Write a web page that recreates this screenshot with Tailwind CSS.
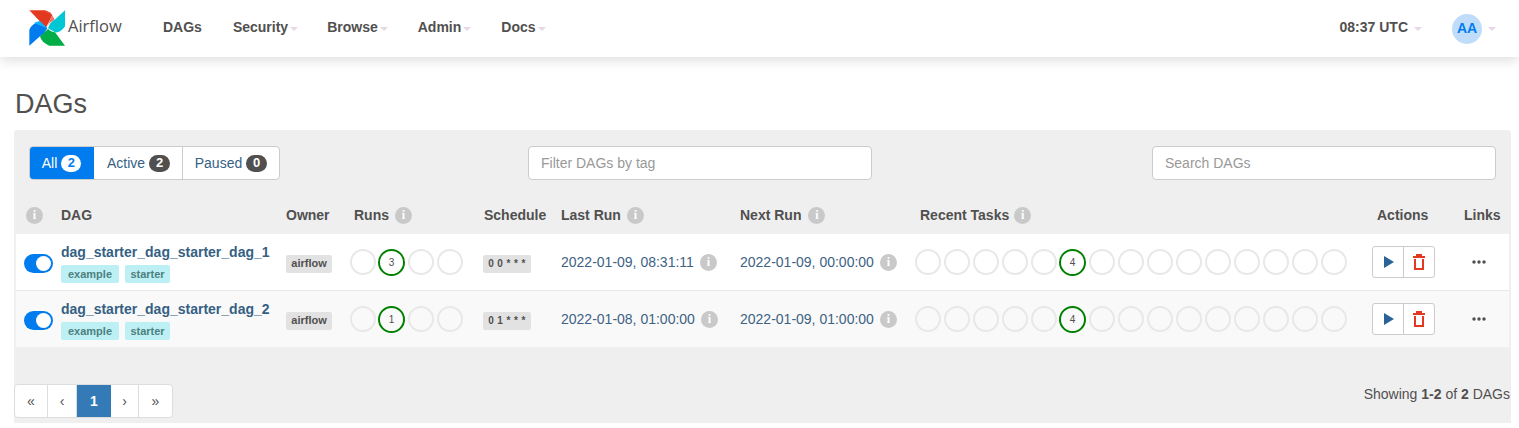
<!DOCTYPE html>
<html><head><meta charset="utf-8"><script src="https://cdn.jsdelivr.net/npm/@tailwindcss/browser@4"></script></head>
<body class="bg-white overflow-hidden font-['Liberation_Sans',Arial,sans-serif] text-[14px] text-[#51504f]">
<nav class="h-[57px] bg-white shadow-[0_3px_12px_rgba(0,0,0,0.14)] flex items-center relative font-bold pb-[2px]">
  <svg class="ml-[20px] w-[50px] h-[50px] shrink-0" viewBox="0 0 150 150" aria-hidden="true">
    <path d="M28 22 L75 22 Q92 27 97 37 L78 74 Z" fill="#e43921"/>
    <path d="M75 24 Q95 30 104 50 Q88 56 80 74 L97 37 Z" fill="#f0705c"/>
    <path d="M135 22 L135 70 Q122 90 105 88 L84 76 Q90 56 104 50 Z" fill="#00c7d4"/>
    <path d="M135 128 L88 128 Q64 118 60 100 L84 78 Q96 88 105 88 Z" fill="#00ad46"/>
    <path d="M28 128 L28 80 Q38 60 60 55 L82 76 Q74 92 60 100 Z" fill="#017cee"/>
    <path d="M42 60 Q50 55 60 55 L82 76 Z" fill="#0cb6ff"/>
  </svg>
  <span class="text-[16.5px] font-normal font-['Open_Sans',sans-serif] text-[#51504f] -ml-[2px] w-[95px] mt-[-3px]">Airflow</span>
  <span>DAGs</span>
  <span class="ml-[31px]">Security</span><svg class="w-[8px] h-[4px] ml-[2px] mt-[2px]" viewBox="0 0 8 4"><path d="M0 0H8L4 4Z" fill="#e6d8e6"/></svg>
  <span class="ml-[29px]">Browse</span><svg class="w-[8px] h-[4px] ml-[2px] mt-[2px]" viewBox="0 0 8 4"><path d="M0 0H8L4 4Z" fill="#e6d8e6"/></svg>
  <span class="ml-[30px]">Admin</span><svg class="w-[8px] h-[4px] ml-[2px] mt-[2px]" viewBox="0 0 8 4"><path d="M0 0H8L4 4Z" fill="#e6d8e6"/></svg>
  <span class="ml-[30px]">Docs</span><svg class="w-[8px] h-[4px] ml-[2px] mt-[2px]" viewBox="0 0 8 4"><path d="M0 0H8L4 4Z" fill="#e6d8e6"/></svg>
  <span class="ml-auto">08:37 UTC</span><svg class="w-[8px] h-[4px] ml-[6px] mt-[2px]" viewBox="0 0 8 4"><path d="M0 0H8L4 4Z" fill="#e6d8e6"/></svg>
  <span class="ml-[30px] w-[30px] h-[30px] rounded-full bg-[#bfdcfb] text-[#017cee] flex items-center justify-center mt-[2px]">AA</span><svg class="w-[8px] h-[4px] ml-[6px] mr-[23px] mt-[2px]" viewBox="0 0 8 4"><path d="M0 0H8L4 4Z" fill="#e6d8e6"/></svg>
</nav>
<main class="pl-[14px] pr-[8px]">
  <h2 class="text-[27px] leading-[30px] font-normal pl-[1px] mt-[32px] mb-[11px]">DAGs</h2>
  <section class="h-[293px] bg-[#efefef] rounded-t-[3px] px-[2px] flex flex-col">
    <div class="flex items-center h-[34px] mt-[16px] pl-[13px] pr-[13px]">
      <div class="flex w-[251px] h-[34px] rounded-[4px] bg-white border border-[#ccc] overflow-hidden text-[#365f84]">
        <span class="w-[65px] -m-px bg-[#017cee] text-white flex items-center justify-center gap-[4px]">All <b class="w-[20px] h-[17px] rounded-full bg-white text-[#017cee] text-[13px] flex items-center justify-center">2</b></span>
        <span class="w-[90px] pl-[2px] border-r border-[#ccc] flex items-center justify-center gap-[4px]">Active <b class="w-[21px] h-[17px] rounded-full bg-[#51504f] text-white text-[13px] flex items-center justify-center">2</b></span>
        <span class="flex-1 flex items-center justify-center gap-[4px]">Paused <b class="w-[21px] h-[17px] rounded-full bg-[#51504f] text-white text-[13px] flex items-center justify-center">0</b></span>
      </div>
      <div class="ml-[248px] w-[344px] h-[34px] rounded-[4px] bg-white border border-[#ccc] pl-[12px] flex items-center text-[#999]">Filter DAGs by tag</div>
      <div class="ml-auto w-[344px] h-[34px] rounded-[4px] bg-white border border-[#ccc] pl-[12px] flex items-center text-[#999]">Search DAGs</div>
    </div>
    <div class="grid grid-cols-[45px_225px_64px_134px_77px_179px_175px_457px_92px_1fr] items-center h-[38px] mt-[16px] font-bold">
      <span class="pl-[10px]"><span class="w-[17px] h-[17px] rounded-full bg-[#c9c9c9] text-white text-[12px] font-bold font-['Liberation_Serif',serif] flex items-center justify-center">i</span></span>
      <span>DAG</span><span>Owner</span>
      <span class="pl-[4px] flex items-center gap-[6px]">Runs <span class="w-[17px] h-[17px] rounded-full bg-[#c9c9c9] text-white text-[12px] font-['Liberation_Serif',serif] flex items-center justify-center">i</span></span>
      <span>Schedule</span>
      <span class="flex items-center gap-[6px]">Last Run <span class="w-[17px] h-[17px] rounded-full bg-[#c9c9c9] text-white text-[12px] font-['Liberation_Serif',serif] flex items-center justify-center">i</span></span>
      <span class="flex items-center gap-[7px]">Next Run <span class="w-[17px] h-[17px] rounded-full bg-[#c9c9c9] text-white text-[12px] font-['Liberation_Serif',serif] flex items-center justify-center">i</span></span>
      <span class="pl-[5px] flex items-center gap-[5px]">Recent Tasks <span class="w-[17px] h-[17px] rounded-full bg-[#c9c9c9] text-white text-[12px] font-['Liberation_Serif',serif] flex items-center justify-center">i</span></span>
      <span class="pl-[5px]">Actions</span><span>Links</span>
    </div>

    <div class="grid grid-cols-[45px_225px_64px_134px_77px_179px_175px_457px_92px_1fr] items-center h-[57px] bg-white border-b border-[#e8e8e8]">
      <span class="pl-[8px] mt-[2px]"><span class="w-[29px] h-[19px] rounded-full bg-[#017cee] flex items-center justify-end pr-[2px]"><span class="w-[15px] h-[15px] rounded-full bg-white"></span></span></span>
      <div class="pt-[1px]"><div class="font-bold text-[#365f84] leading-[20px]">dag_starter_dag_starter_dag_1</div><div class="flex gap-[6px] mt-[3px]"><span class="w-[58px] h-[18px] rounded-[2px] bg-[#bdf0f4] text-[#4e8080] text-[11px] font-bold flex items-center justify-center">example</span><span class="w-[45px] h-[18px] rounded-[2px] bg-[#bdf0f4] text-[#4e8080] text-[11px] font-bold flex items-center justify-center">starter</span></div></div>
      <span class="w-[46px] h-[18px] mt-[3px] rounded-[2px] bg-[#e2e2e2] text-[11px] font-bold flex items-center justify-center">airflow</span>
      <div class="flex -ml-[2px]"><span class="w-[29px] flex justify-center"><span class="w-[26px] h-[26px] rounded-full border-2 border-[#e8e8e8]"></span></span><span class="w-[29px] flex justify-center"><span class="w-[27px] h-[27px] rounded-full border-2 border-[#008000] text-[10px] flex items-center justify-center">3</span></span><span class="w-[29px] flex justify-center"><span class="w-[26px] h-[26px] rounded-full border-2 border-[#e8e8e8]"></span></span><span class="w-[29px] flex justify-center"><span class="w-[26px] h-[26px] rounded-full border-2 border-[#e8e8e8]"></span></span></div>
      <span class="-ml-px w-[48px] h-[18px] mt-[3px] rounded-[2px] bg-[#e2e2e2] text-[10px] font-bold tracking-[0.4px] whitespace-nowrap flex items-center justify-center">0 0 * * *</span>
      <div class="flex items-center gap-[6px] text-[#3d6283]">2022-01-09, 08:31:11 <span class="w-[17px] h-[17px] rounded-full bg-[#c9c9c9] text-white text-[12px] font-bold font-['Liberation_Serif',serif] flex items-center justify-center">i</span></div>
      <div class="flex items-center gap-[6px] text-[#3d6283]">2022-01-09, 00:00:00 <span class="w-[17px] h-[17px] rounded-full bg-[#c9c9c9] text-white text-[12px] font-bold font-['Liberation_Serif',serif] flex items-center justify-center">i</span></div>
      <div class="flex -ml-[2px]"><span class="w-[29px] flex justify-center"><span class="w-[26px] h-[26px] rounded-full border-2 border-[#e8e8e8]"></span></span><span class="w-[29px] flex justify-center"><span class="w-[26px] h-[26px] rounded-full border-2 border-[#e8e8e8]"></span></span><span class="w-[29px] flex justify-center"><span class="w-[26px] h-[26px] rounded-full border-2 border-[#e8e8e8]"></span></span><span class="w-[29px] flex justify-center"><span class="w-[26px] h-[26px] rounded-full border-2 border-[#e8e8e8]"></span></span><span class="w-[29px] flex justify-center"><span class="w-[26px] h-[26px] rounded-full border-2 border-[#e8e8e8]"></span></span><span class="w-[29px] flex justify-center"><span class="w-[27px] h-[27px] rounded-full border-2 border-[#008000] text-[10px] flex items-center justify-center">4</span></span><span class="w-[29px] flex justify-center"><span class="w-[26px] h-[26px] rounded-full border-2 border-[#e8e8e8]"></span></span><span class="w-[29px] flex justify-center"><span class="w-[26px] h-[26px] rounded-full border-2 border-[#e8e8e8]"></span></span><span class="w-[29px] flex justify-center"><span class="w-[26px] h-[26px] rounded-full border-2 border-[#e8e8e8]"></span></span><span class="w-[29px] flex justify-center"><span class="w-[26px] h-[26px] rounded-full border-2 border-[#e8e8e8]"></span></span><span class="w-[29px] flex justify-center"><span class="w-[26px] h-[26px] rounded-full border-2 border-[#e8e8e8]"></span></span><span class="w-[29px] flex justify-center"><span class="w-[26px] h-[26px] rounded-full border-2 border-[#e8e8e8]"></span></span><span class="w-[29px] flex justify-center"><span class="w-[26px] h-[26px] rounded-full border-2 border-[#e8e8e8]"></span></span><span class="w-[29px] flex justify-center"><span class="w-[26px] h-[26px] rounded-full border-2 border-[#e8e8e8]"></span></span><span class="w-[29px] flex justify-center"><span class="w-[26px] h-[26px] rounded-full border-2 border-[#e8e8e8]"></span></span></div>
      <div class="flex w-[63px] h-[32px] rounded-[3px] border border-[#ccc] bg-white"><span class="w-[31px] border-r border-[#ccc] flex items-center justify-center"><svg class="ml-[2px]" width="10" height="12" viewBox="0 0 10 12"><path d="M0 0L10 6L0 12Z" fill="#2a6496"/></svg></span><span class="flex-1 flex items-center justify-center"><svg width="12" height="16" viewBox="0 0 12 16"><path d="M0 3H12M4 3V1H8V3M2 5V15H10V5" fill="none" stroke="#e43921" stroke-width="2"/></svg></span></div>
      <svg class="ml-[8px]" width="14" height="4" viewBox="0 0 14 4"><circle cx="2" cy="2" r="1.7" fill="#51504f"/><circle cx="7" cy="2" r="1.7" fill="#51504f"/><circle cx="12" cy="2" r="1.7" fill="#51504f"/></svg>
    </div>

    <div class="grid grid-cols-[45px_225px_64px_134px_77px_179px_175px_457px_92px_1fr] items-center h-[57px] bg-[#f9f9f9] border-b border-[#f1f1f1]">
      <span class="pl-[8px] mt-[2px]"><span class="w-[29px] h-[19px] rounded-full bg-[#017cee] flex items-center justify-end pr-[2px]"><span class="w-[15px] h-[15px] rounded-full bg-white"></span></span></span>
      <div class="pt-[1px]"><div class="font-bold text-[#365f84] leading-[20px]">dag_starter_dag_starter_dag_2</div><div class="flex gap-[6px] mt-[3px]"><span class="w-[58px] h-[18px] rounded-[2px] bg-[#bdf0f4] text-[#4e8080] text-[11px] font-bold flex items-center justify-center">example</span><span class="w-[45px] h-[18px] rounded-[2px] bg-[#bdf0f4] text-[#4e8080] text-[11px] font-bold flex items-center justify-center">starter</span></div></div>
      <span class="w-[46px] h-[18px] mt-[3px] rounded-[2px] bg-[#e2e2e2] text-[11px] font-bold flex items-center justify-center">airflow</span>
      <div class="flex -ml-[2px]"><span class="w-[29px] flex justify-center"><span class="w-[26px] h-[26px] rounded-full border-2 border-[#e8e8e8]"></span></span><span class="w-[29px] flex justify-center"><span class="w-[27px] h-[27px] rounded-full border-2 border-[#008000] text-[10px] flex items-center justify-center">1</span></span><span class="w-[29px] flex justify-center"><span class="w-[26px] h-[26px] rounded-full border-2 border-[#e8e8e8]"></span></span><span class="w-[29px] flex justify-center"><span class="w-[26px] h-[26px] rounded-full border-2 border-[#e8e8e8]"></span></span></div>
      <span class="-ml-px w-[48px] h-[18px] mt-[3px] rounded-[2px] bg-[#e2e2e2] text-[10px] font-bold tracking-[0.4px] whitespace-nowrap flex items-center justify-center">0 1 * * *</span>
      <div class="flex items-center gap-[6px] text-[#3d6283]">2022-01-08, 01:00:00 <span class="w-[17px] h-[17px] rounded-full bg-[#c9c9c9] text-white text-[12px] font-bold font-['Liberation_Serif',serif] flex items-center justify-center">i</span></div>
      <div class="flex items-center gap-[6px] text-[#3d6283]">2022-01-09, 01:00:00 <span class="w-[17px] h-[17px] rounded-full bg-[#c9c9c9] text-white text-[12px] font-bold font-['Liberation_Serif',serif] flex items-center justify-center">i</span></div>
      <div class="flex -ml-[2px]"><span class="w-[29px] flex justify-center"><span class="w-[26px] h-[26px] rounded-full border-2 border-[#e8e8e8]"></span></span><span class="w-[29px] flex justify-center"><span class="w-[26px] h-[26px] rounded-full border-2 border-[#e8e8e8]"></span></span><span class="w-[29px] flex justify-center"><span class="w-[26px] h-[26px] rounded-full border-2 border-[#e8e8e8]"></span></span><span class="w-[29px] flex justify-center"><span class="w-[26px] h-[26px] rounded-full border-2 border-[#e8e8e8]"></span></span><span class="w-[29px] flex justify-center"><span class="w-[26px] h-[26px] rounded-full border-2 border-[#e8e8e8]"></span></span><span class="w-[29px] flex justify-center"><span class="w-[27px] h-[27px] rounded-full border-2 border-[#008000] text-[10px] flex items-center justify-center">4</span></span><span class="w-[29px] flex justify-center"><span class="w-[26px] h-[26px] rounded-full border-2 border-[#e8e8e8]"></span></span><span class="w-[29px] flex justify-center"><span class="w-[26px] h-[26px] rounded-full border-2 border-[#e8e8e8]"></span></span><span class="w-[29px] flex justify-center"><span class="w-[26px] h-[26px] rounded-full border-2 border-[#e8e8e8]"></span></span><span class="w-[29px] flex justify-center"><span class="w-[26px] h-[26px] rounded-full border-2 border-[#e8e8e8]"></span></span><span class="w-[29px] flex justify-center"><span class="w-[26px] h-[26px] rounded-full border-2 border-[#e8e8e8]"></span></span><span class="w-[29px] flex justify-center"><span class="w-[26px] h-[26px] rounded-full border-2 border-[#e8e8e8]"></span></span><span class="w-[29px] flex justify-center"><span class="w-[26px] h-[26px] rounded-full border-2 border-[#e8e8e8]"></span></span><span class="w-[29px] flex justify-center"><span class="w-[26px] h-[26px] rounded-full border-2 border-[#e8e8e8]"></span></span><span class="w-[29px] flex justify-center"><span class="w-[26px] h-[26px] rounded-full border-2 border-[#e8e8e8]"></span></span></div>
      <div class="flex w-[63px] h-[32px] rounded-[3px] border border-[#ccc] bg-white"><span class="w-[31px] border-r border-[#ccc] flex items-center justify-center"><svg class="ml-[2px]" width="10" height="12" viewBox="0 0 10 12"><path d="M0 0L10 6L0 12Z" fill="#2a6496"/></svg></span><span class="flex-1 flex items-center justify-center"><svg width="12" height="16" viewBox="0 0 12 16"><path d="M0 3H12M4 3V1H8V3M2 5V15H10V5" fill="none" stroke="#e43921" stroke-width="2"/></svg></span></div>
      <svg class="ml-[8px]" width="14" height="4" viewBox="0 0 14 4"><circle cx="2" cy="2" r="1.7" fill="#51504f"/><circle cx="7" cy="2" r="1.7" fill="#51504f"/><circle cx="12" cy="2" r="1.7" fill="#51504f"/></svg>
    </div>

    <div class="flex items-start justify-between mt-[36px] -ml-[2px] -mr-[1px]">
      <div class="flex h-[34px] w-[159px] rounded-[4px] bg-white border border-[#ddd] text-[#51504f] overflow-hidden">
        <span class="w-[33px] border-r border-[#ddd] flex items-center justify-center">«</span>
        <span class="w-[29px] border-r border-[#ddd] flex items-center justify-center">‹</span>
        <span class="w-[34px] -my-px bg-[#337ab7] text-white font-bold flex items-center justify-center">1</span>
        <span class="w-[28px] border-r border-[#ddd] flex items-center justify-center">›</span>
        <span class="flex-1 flex items-center justify-center">»</span>
      </div>
      <div class="leading-[20px]">Showing <b>1-2</b> of <b>2</b> DAGs</div>
    </div>
  </section>
</main>
</body></html>
